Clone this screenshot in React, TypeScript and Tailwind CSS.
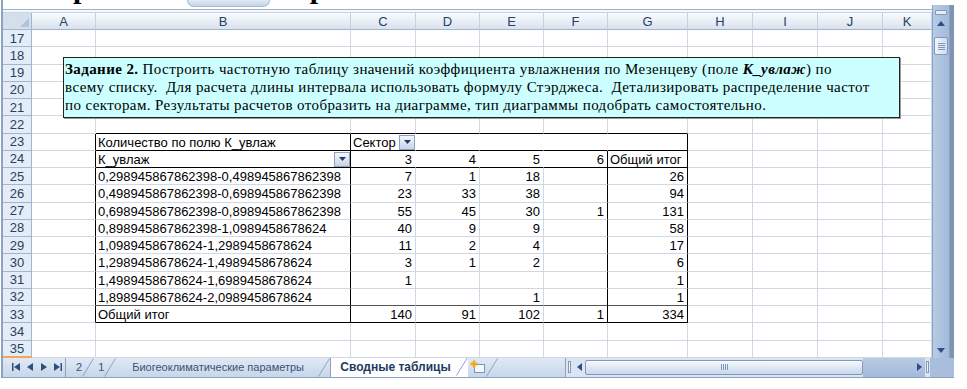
import React from 'react';

const GRID = 'grid grid-rows-1 grid-cols-[29px_64px_255px_65px_64px_64px_64px_80px_65px_65px_65px_49px]';
const letters = ['A', 'B', 'C', 'D', 'E', 'F', 'G', 'H', 'I', 'J', 'K'];
const rowNums = [17, 18, 19, 20, 21, 22, 23, 24, 25, 26, 27, 28, 29, 30, 31, 32, 33, 34, 35];

const pivot: Record<number, { label: string; v: string[] }> = {
  25: { label: '0,298945867862398-0,498945867862398', v: ['7', '1', '18', '', '26'] },
  26: { label: '0,498945867862398-0,698945867862398', v: ['23', '33', '38', '', '94'] },
  27: { label: '0,698945867862398-0,898945867862398', v: ['55', '45', '30', '1', '131'] },
  28: { label: '0,898945867862398-1,0989458678624', v: ['40', '9', '9', '', '58'] },
  29: { label: '1,0989458678624-1,2989458678624', v: ['11', '2', '4', '', '17'] },
  30: { label: '1,2989458678624-1,4989458678624', v: ['3', '1', '2', '', '6'] },
  31: { label: '1,4989458678624-1,6989458678624', v: ['1', '', '', '', '1'] },
  32: { label: '1,8989458678624-2,0989458678624', v: ['', '', '1', '', '1'] },
  33: { label: 'Общий итог', v: ['140', '91', '102', '1', '334'] },
};

const DropBtn = () => (
  <span className="ml-auto flex h-[15px] w-[16px] shrink-0 items-center justify-center border border-[#8da3c1] bg-gradient-to-b from-[#f4f7fb] to-[#c6d4e7]">
    <svg width="7" height="4" viewBox="0 0 7 4">
      <path d="M0 0h7L3.5 4z" fill="#1f3c66" />
    </svg>
  </span>
);

const rightBorder = (r: number, c: number) => {
  const inTable = r >= 23 && r <= 33;
  if ((c === 1 || c === 2 || c === 7) && inTable) return 'border-r border-r-black';
  if (c === 6 && r >= 24 && r <= 33) return 'border-r border-r-black';
  if (r === 23 && c >= 3 && c <= 6) return 'border-r border-r-white';
  if (r === 24 && c >= 3 && c <= 5) return 'border-r border-r-white';
  return 'border-r border-r-[#d0d7e5]';
};

const bottomBorder = (r: number, c: number) => {
  if (c >= 2 && c <= 7 && (r === 22 || r === 23 || r === 24 || r === 33)) return 'border-b border-b-black';
  if (c >= 2 && c <= 7 && r === 32) return 'border-b border-b-[#555555]';
  return 'border-b border-b-[#d0d7e5]';
};

const cellContent = (r: number, c: number) => {
  if (r === 23 && c === 2) return <span className="pl-[2px]">Количество по полю К_увлаж</span>;
  if (r === 23 && c === 3)
    return (
      <>
        <span className="pl-[2px]">Сектор</span>
        <DropBtn />
      </>
    );
  if (r === 24 && c === 2)
    return (
      <>
        <span className="pl-[2px]">К_увлаж</span>
        <DropBtn />
      </>
    );
  if (r === 24 && c >= 3 && c <= 6) return <span className="ml-auto pr-[3px]">{c}</span>;
  if (r === 24 && c === 7) return <span className="pl-[2px]">Общий итог</span>;
  const p = pivot[r];
  if (!p) return null;
  if (c === 2) return <span className="pl-[2px]">{p.label}</span>;
  if (c >= 3 && c <= 7) return <span className="ml-auto pr-[3px]">{p.v[c - 3]}</span>;
  return null;
};

const SheetRow = ({ r }: { r: number }) => (
  <div className={`${GRID} h-[17.26px]`}>
    <div
      className={`flex items-center justify-center overflow-hidden border-r border-r-[#9eb6ce] bg-[#e4ecf7] text-[13px] leading-none text-[#27415f] ${
        r === 35 ? 'border-b-2 border-b-[#f3a751]' : 'border-b border-b-[#9eb6ce]'
      }`}
    >
      {r}
    </div>
    {letters.map((_, i) => {
      const c = i + 1;
      return (
        <div
          key={c}
          className={`flex items-center overflow-hidden whitespace-nowrap bg-white pt-[1px] text-[13px] leading-none text-black ${rightBorder(r, c)} ${bottomBorder(r, c)}`}
        >
          {cellContent(r, c)}
        </div>
      );
    })}
  </div>
);

const Slant = () => (
  <svg width="12" height="19" viewBox="0 0 12 19" className="shrink-0">
    <path d="M0.5 18.5L11.5 0.5" stroke="#8ca2bf" strokeWidth="1" fill="none" />
  </svg>
);

const Arrow = ({ d }: { d: string }) => (
  <svg width="8" height="8" viewBox="0 0 8 8">
    <path d={d} fill="#2d4f80" />
  </svg>
);

export default function App() {
  return (
    <div className="h-[389px] w-[967px] overflow-hidden bg-white font-['Liberation_Sans',Arial,sans-serif]">
      {/* top strip: bottom of heading above the window */}
      <div className="ml-[1px] flex h-[9px] w-[953px] overflow-hidden border-l-2 border-[#8ca2bf]">
        <span className="ml-[70px] mt-[-27px] font-['Liberation_Serif',serif] text-[30px] font-bold leading-none">р</span>
        <div className="ml-[97px] h-[7px] w-[83px] rounded-b-[8px] border-x border-b border-[#a9bcd4] bg-gradient-to-b from-[#e2eaf4] to-[#c5d4e7]" />
        <span className="ml-[40px] mt-[-27px] font-['Liberation_Serif',serif] text-[30px] font-bold leading-none">р</span>
      </div>

      <div className="ml-[1px] w-[953px] border-l-2 border-[#8ca2bf]">
        <div className="flex">
          <div className="w-[929px]">
            <div className="h-[3px] border-t border-[#9db2cc] bg-[#f4f7fb]" />
            <div className={`${GRID} h-[18px] border-t border-[#c9d5e5]`}>
              <div className="flex items-end justify-end border-r border-b border-[#9eb6ce] bg-[#d5dfec] p-[2px]">
                <svg width="9" height="9" viewBox="0 0 9 9">
                  <path d="M9 0V9H0z" fill="#b3c4da" />
                </svg>
              </div>
              {letters.map((l) => (
                <div
                  key={l}
                  className="flex items-center justify-center border-r border-r-[#c5d2e3] border-b border-b-[#9eb6ce] bg-gradient-to-b from-[#f9fbfd] to-[#d9e2ee] text-[13px] leading-none text-[#27415f]"
                >
                  {l}
                </div>
              ))}
            </div>
            <div className="relative">
              {rowNums.map((r) => (
                <SheetRow key={r} r={r} />
              ))}
              <div className="absolute left-[60px] top-[27px] h-[61px] w-[837px] overflow-hidden whitespace-pre border border-[#222] bg-[#ccffff] px-[1px] pt-[2px] font-['Liberation_Serif',serif] text-[15px] leading-[18px] tracking-[0.4px] text-black shadow-[1px_1px_0_#9a9a9a]">
                <div>
                  <b>Задание 2.</b> Построить частотную таблицу значений коэффициента увлажнения по Мезенцеву (поле{' '}
                  <b className="italic">К_увлаж</b>) по
                </div>
                <div>всему списку.  Для расчета длины интервала использовать формулу Стэрджеса.  Детализировать распределение частот</div>
                <div>по секторам. Результаты расчетов отобразить на диаграмме, тип диаграммы подобрать самостоятельно.</div>
              </div>
            </div>
          </div>

          {/* vertical scrollbar */}
          <div className="mt-[-4px] flex w-[18px] flex-col border-x border-[#8aa2c3] bg-gradient-to-r from-[#b8cbe4] to-[#a3badb]">
            <div className="mx-[2px] mt-[5px] h-[5px] rounded-[1px] border border-[#7f98bb] bg-[#e6edf7]" />
            <div className="flex h-[16px] items-center justify-center">
              <svg width="8" height="5" viewBox="0 0 8 5">
                <path d="M0 5L4 0L8 5z" fill="#2d4f80" />
              </svg>
            </div>
            <div className="mx-[1px] mt-[6px] flex h-[18px] flex-col items-center justify-center gap-[1px] rounded-[2px] border border-[#7f98bb] bg-gradient-to-r from-[#f1f5fb] to-[#cfdcee]">
              <span className="h-px w-[7px] bg-[#7f98bb]" />
              <span className="h-px w-[7px] bg-[#7f98bb]" />
              <span className="h-px w-[7px] bg-[#7f98bb]" />
              <span className="h-px w-[7px] bg-[#7f98bb]" />
            </div>
            <div className="flex-1" />
            <div className="flex h-[14px] items-center justify-center">
              <svg width="8" height="5" viewBox="0 0 8 5">
                <path d="M0 0L4 5L8 0z" fill="#2d4f80" />
              </svg>
            </div>
          </div>
          <div className="mt-[-4px] w-[4px] bg-[#7f94b3]" />
        </div>

        {/* sheet tabs + horizontal scrollbar */}
        <div className="flex h-[20px] items-stretch border-b border-[#8ca2bf] bg-gradient-to-b from-[#e1e9f4] to-[#c7d6ea] text-[11px] text-[#3a5377]">
          <div className="flex w-[62px] items-center gap-[6px] pl-[9px]">
            <Arrow d="M0 0h1.5v8H0zM8 0v8L2 4z" />
            <Arrow d="M7 0v8L1 4z" />
            <Arrow d="M1 0v8l6-4z" />
            <Arrow d="M0 0v8l6-4zM6.5 0H8v8H6.5z" />
          </div>
          <div className="flex items-center border-l border-[#8ca2bf] pl-[10px]">
            <span>2</span>
            <Slant />
          </div>
          <div className="flex items-center pl-[4px]">
            <span>1</span>
            <Slant />
          </div>
          <div className="flex w-[214px] items-center pl-[16px]">
            <span className="flex-1">Биогеоклиматические параметры</span>
            <Slant />
          </div>
          <div className="mt-[-1px] flex w-[138px] items-center border-l border-[#8ca2bf] bg-white pl-[9px] text-[12px] font-bold text-[#1d3a62]">
            <span className="flex-1">Сводные таблицы</span>
            <Slant />
          </div>
          <div className="flex w-[34px] items-center pl-[2px]">
            <svg width="16" height="14" viewBox="0 0 16 14">
              <rect x="4.5" y="4.5" width="10" height="8" fill="#f4f7fb" stroke="#7f94b3" />
              <circle cx="4" cy="4" r="3" fill="#f7c443" />
              <path d="M4 0v8M0 4h8" stroke="#e39b17" strokeWidth="1" />
            </svg>
            <Slant />
          </div>
          <div className="w-[63px]" />
          <div className="flex w-[365px] items-center border-l border-[#8ca2bf] bg-[#dbe5f2]">
            <div className="mx-[2px] h-[12px] w-[3px] border border-[#7f98bb] bg-[#eef3f9]" />
            <div className="flex w-[12px] items-center justify-center">
              <svg width="5" height="8" viewBox="0 0 5 8">
                <path d="M5 0v8L0 4z" fill="#2d4f80" />
              </svg>
            </div>
            <div className="flex h-[15px] w-[278px] items-center justify-center gap-[1px] rounded-[2px] border border-[#7f98bb] bg-gradient-to-b from-[#f6f9fc] to-[#c9d8ec]">
              <span className="h-[6px] w-px bg-[#7f98bb]" />
              <span className="h-[6px] w-px bg-[#7f98bb]" />
              <span className="h-[6px] w-px bg-[#7f98bb]" />
              <span className="h-[6px] w-px bg-[#7f98bb]" />
            </div>
            <div className="flex-1 self-stretch bg-gradient-to-b from-[#b8cbe4] to-[#a3badb]" />
            <div className="flex w-[12px] items-center justify-center self-stretch bg-gradient-to-b from-[#b8cbe4] to-[#a3badb]">
              <svg width="5" height="8" viewBox="0 0 5 8">
                <path d="M0 0v8l5-4z" fill="#2d4f80" />
              </svg>
            </div>
            <div className="mx-[1px] h-[12px] w-[3px] border border-[#7f98bb] bg-[#eef3f9]" />
          </div>
          <div className="flex-1 bg-[#a9bedb]" />
        </div>
      </div>
    </div>
  );
}
